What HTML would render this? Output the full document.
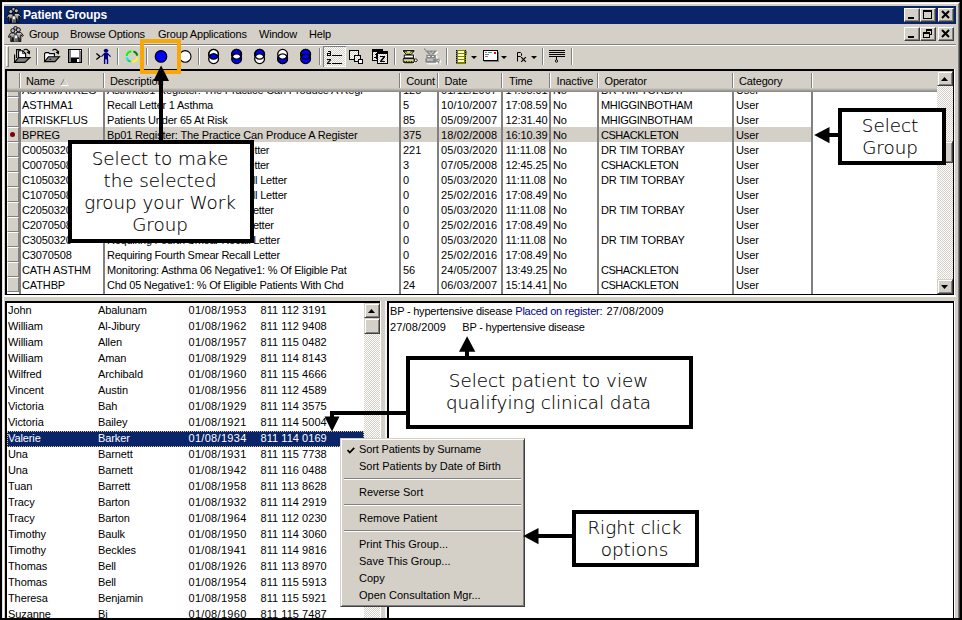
<!DOCTYPE html>
<html lang="en"><head><meta charset="utf-8"><title>Patient Groups</title>
<style>
html,body{margin:0;padding:0}
body{width:962px;height:620px;overflow:hidden;background:#000;font-family:"Liberation Sans",sans-serif;font-size:11px;color:#000}
#win{position:absolute;left:0;top:0;width:962px;height:620px;background:#000;overflow:hidden}
#win div,#win span,#win i,#win b,#win svg,#win u,#win em{position:absolute;display:block;box-sizing:border-box}
#win span{white-space:nowrap;font-style:normal}
#face{left:2px;top:2px;width:958px;height:616px;background:#d4d0c8;border-left:1px solid #e8e6e1;border-top:1px solid #e8e6e1;border-right:1px solid #404040;border-bottom:0}
#face2{left:3px;top:3px;width:956px;height:615px;border-left:1px solid #fff;border-top:1px solid #fff;border-right:1px solid #808080}
/* title */
#title{left:4px;top:6px;width:952px;height:18px;background:#0a246a}
#title span{left:19px;top:0;line-height:18px;color:#fff;font-weight:bold;font-size:12px;letter-spacing:-0.15px}
.cb{width:16px;height:14px;background:#d4d0c8;border:1px solid;border-color:#fff #404040 #404040 #fff;box-shadow:inset -1px -1px 0 #808080}
.cb svg{left:0;top:0}
/* menu */
#menu{left:4px;top:24px;width:952px;height:19px}
#menu span{top:0;line-height:20px;font-size:11px;letter-spacing:-0.2px}
#mline{left:4px;top:44px;width:952px;height:2px;border-top:1px solid #808080;border-bottom:1px solid #fff}
/* toolbar */
#tb{left:4px;top:45px;width:952px;height:23px}
.grip{left:2px;top:1px;width:3px;height:21px;border-left:1px solid #fff;border-top:1px solid #fff;border-right:1px solid #808080;border-bottom:1px solid #808080}
.tsep{top:3px;width:2px;height:17px;border-left:1px solid #808080;border-right:1px solid #fff}
.tpress{left:319px;top:1px;width:23px;height:21px;border:1px solid;border-color:#808080 #fff #fff #808080;background:#eae8e4}
/* top table */
#tbl{z-index:0;left:5px;top:69px;width:949px;height:226px;border-left:2px solid #000;border-top:2px solid #000;border-right:1px solid #000;border-bottom:1px solid #000;background:#fff;overflow:hidden}
#tblw{left:954px;top:69px;width:1px;height:226px;background:#fff}
#thead{left:0;top:0;width:930px;height:20.6px;z-index:2;background:linear-gradient(to bottom,#d4d0c8 0,#d4d0c8 17px,#b4b1ab 18.5px,#8c8a86 20.6px)}
.hs{top:2px;width:2px;height:15px;border-left:1px solid #808080;border-right:1px solid #fff}
.hc{top:0;line-height:20px;font-size:11px;letter-spacing:-0.15px}
.sortarrow{left:53px;top:6.5px}
#tbody{left:0;top:20px;width:930px;height:203px;overflow:hidden;background:#fff}
.tr{left:0;width:804px;height:15px}
.tr span{top:0.6px;line-height:15px;letter-spacing:-0.12px}
.tr.sel{background:#d4d0c8}
.ind{left:0;top:0;width:12px;height:15px;background:#d4d0c8;border:1px solid;border-color:#fff #808080 #808080 #fff}
.ind u{left:2px;top:4px;width:5px;height:5px;border-radius:50%;background:#800000}
.vs{top:0;width:2px;height:203px;background:#808080}
/* scrollbars */
.sb{width:16px;background:#eae8e4;background-image:linear-gradient(45deg,#fff 25%,transparent 25%,transparent 75%,#fff 75%),linear-gradient(45deg,#fff 25%,transparent 25%,transparent 75%,#fff 75%);background-size:2px 2px;background-position:0 0,1px 1px;background-color:#d4d0c8}
.sbb{left:0;width:16px;height:15px;background:#d4d0c8;border:1px solid;border-color:#d4d0c8 #404040 #404040 #d4d0c8;box-shadow:inset 1px 1px 0 #fff,inset -1px -1px 0 #808080}
.sbb svg{left:50%;top:50%;margin-left:-4px;margin-top:-2px}
.sbt{left:0;width:16px;background:#d4d0c8;border:1px solid;border-color:#d4d0c8 #404040 #404040 #d4d0c8;box-shadow:inset 1px 1px 0 #fff,inset -1px -1px 0 #808080}
/* splitter h */
#hsplit{left:4px;top:295px;width:952px;height:6px;background:#d4d0c8;border-top:2px solid #fff}
/* patient list */
#plistb{left:5px;top:301px;width:376px;height:317px;background:#000}
#plist{left:7px;top:303px;width:373px;height:315px;background:#fff;overflow:hidden}
.pr{left:0;width:357px;height:16px}
.pr span{top:-1px;line-height:16px;letter-spacing:-0.1px}
.pr.psel{background:#0a246a;color:#fff;outline:1px dotted #d8c878;outline-offset:-1px}
#vsplit{left:380px;top:301px;width:7px;height:317px;background:#d4d0c8;border-left:1px solid #fff;border-right:2px solid #f4f3f0}
#rpaneb{left:386.5px;top:301px;width:567.5px;height:317px;background:#000}
#rpane{left:389px;top:303px;width:564px;height:315px;background:#fff;overflow:hidden}
#rpanew{left:954px;top:301px;width:1px;height:317px;background:#fff}
.rl{height:16px;line-height:16px;white-space:nowrap}
/* context menu */
#ctx{left:340px;top:438px;width:185px;height:169px;background:#d4d0c8;border:1px solid;border-color:#d4d0c8 #404040 #404040 #d4d0c8;box-shadow:inset 1px 1px 0 #fff,inset -1px -1px 0 #808080}
#ctx span{left:18px;line-height:17px;height:17px;font-size:11px}
#ctx i{left:3px;width:177px;height:2px;border-top:1px solid #808080;border-bottom:1px solid #fff}
/* callouts */
.co{background:#fff;border:4px solid #000;text-align:center;font-family:"DejaVu Sans","Liberation Sans",sans-serif;font-weight:200;font-size:18.3px;line-height:22px;color:#000;letter-spacing:0;-webkit-text-stroke:0.15px #000}
.ar{background:#000}
#obox{left:140px;top:39px;width:41px;height:35px;border:4px solid #f7a70a}

</style></head>
<body>
<div id="win">
<svg width="0" height="0" style="left:0;top:0"><defs>
<linearGradient id="pg" x1="0" y1="0" x2="0" y2="1"><stop offset="0" stop-color="#d8d8d8"/><stop offset="1" stop-color="#303030"/></linearGradient>
<g id="people">
<circle cx="7.5" cy="2.2" r="1.8" fill="#b0b0b0" stroke="#000" stroke-width="0.9"/>
<circle cx="4.8" cy="4.6" r="2" fill="#b8b8b8" stroke="#000" stroke-width="0.9"/>
<circle cx="10.4" cy="3.8" r="2" fill="#b8b8b8" stroke="#000" stroke-width="0.9"/>
<path d="M2.6 7 H7 V15.6 H5.3 V11.5 H4.5 V15.6 H2.8 V10 L1 11.6 L0.2 10.8 Z" fill="url(#pg)" stroke="#000" stroke-width="0.9"/>
<path d="M8.2 6.4 H12.8 L15.4 9.6 L14.6 10.4 L12.8 8.8 V15.6 H11 V11.8 H10.2 V15.6 H8.2 Z" fill="url(#pg)" stroke="#000" stroke-width="0.9"/>
<path d="M6.2 9 H9.6 V15.8 H8.4 V12.6 H7.6 V15.8 H6.2 Z" fill="#f0f0f0" stroke="#333" stroke-width="0.6"/>
</g>
</defs></svg>
<div id="face"></div><div id="face2"></div>
<div id="title"><svg style="left:2px;top:1px" width="16" height="16" viewBox="0 0 16 16"><use href="#people"/></svg><span>Patient Groups</span>
<div class="cb" style="left:900px;top:2px"><svg width="14" height="12" viewBox="0 0 14 12"><rect x="3" y="8" width="6" height="2"/></svg></div>
<div class="cb" style="left:916px;top:2px"><svg width="14" height="12" viewBox="0 0 14 12"><path d="M2 1 H11 V10 H2 Z M3 3 V9 H10 V3 Z" fill-rule="evenodd"/></svg></div>
<div class="cb" style="left:934px;top:2px"><svg width="14" height="12" viewBox="0 0 14 12"><path d="M3 2 L10 9 M10 2 L3 9" stroke="#000" stroke-width="2" fill="none"/></svg></div>
</div>
<div id="menu"><svg style="left:4px;top:2px" width="16" height="16" viewBox="0 0 16 16"><use href="#people"/></svg>
<span style="left:25px">Group</span><span style="left:66px">Browse Options</span><span style="left:154px">Group Applications</span><span style="left:255px">Window</span><span style="left:305px">Help</span>
<div class="cb" style="left:900px;top:3px"><svg width="14" height="12" viewBox="0 0 14 12"><rect x="3" y="8" width="6" height="2"/></svg></div>
<div class="cb" style="left:916px;top:3px"><svg width="14" height="12" viewBox="0 0 14 12"><path d="M5 1 H11 V7 H9 V10 H2 V4 H5 Z M6 3 V4 H9 V6 H10 V3 Z M3 6 V9 H8 V6 Z" fill-rule="evenodd"/></svg></div>
<div class="cb" style="left:934px;top:3px"><svg width="14" height="12" viewBox="0 0 14 12"><path d="M3 2 L10 9 M10 2 L3 9" stroke="#000" stroke-width="2" fill="none"/></svg></div>
</div>
<div id="mline"></div>
<div id="tb"><div class="grip"></div>
<svg style="left:0;top:0" width="952" height="23" viewBox="4 45 952 23">
<defs>
<pattern id="chk" width="2" height="2" patternUnits="userSpaceOnUse"><rect width="2" height="2" fill="#d4d0c8"/><rect width="1" height="1" fill="#fff"/><rect x="1" y="1" width="1" height="1" fill="#fff"/></pattern>
<clipPath id="cT"><circle cx="0" cy="-2.2" r="4.9"/></clipPath>
</defs>
<g id="seps" shape-rendering="crispEdges">
<path d="M36.5 48V65M88.5 48V65M117.5 48V65M146.5 48V65M198.5 48V65M319.5 48V65M394.5 48V65M446.5 48V65M542.5 48V65M571.5 48V65" stroke="#808080" stroke-width="1" fill="none"/>
<path d="M37.5 48V65M89.5 48V65M118.5 48V65M147.5 48V65M199.5 48V65M320.5 48V65M395.5 48V65M447.5 48V65M543.5 48V65M572.5 48V65" stroke="#fff" stroke-width="1" fill="none"/>
</g>
<!-- 1 open docs -->
<g stroke="#000" stroke-width="1.1" stroke-linejoin="miter">
<path d="M16.6 58V49.6H21" fill="none"/>
<path d="M18.6 58V50.8H22.6L25.6 53.6V58Z" fill="#fff"/>
<path d="M22.6 50.8V53.6H25.6" fill="none" stroke-width="0.8"/>
<path d="M14.6 54.5V62.4" fill="none"/>
<path d="M18.4 57.6H30L24.8 62.4H14.6Z" fill="#808080"/>
<path d="M23.6 50.4Q26.6 47.6 28.8 51.6" fill="none" stroke-width="1.2"/>
<path d="M26.6 52.4L30.2 50.4L29.8 54.6Z" fill="#000" stroke="none"/>
</g>
<!-- 2 open folder -->
<g stroke="#000" stroke-width="1.1">
<path d="M44.6 61.4V53.6L45.6 52.6H48.6L49.6 53.6H54.4V57" fill="#fff"/>
<path d="M48.4 56.8H59.4L55 61.6H44.6Z" fill="#808080"/>
<path d="M52.4 50.4Q55.6 47.8 57.8 51.6" fill="none" stroke-width="1.2"/>
<path d="M55.6 52.4L59.2 50.4L58.8 54.6Z" fill="#000" stroke="none"/>
<rect x="49.5" y="58.8" width="1.6" height="1" fill="#000" stroke="none"/>
</g>
<!-- 3 save -->
<g shape-rendering="crispEdges">
<rect x="68" y="49" width="14" height="14" fill="#000"/>
<rect x="69" y="50" width="2" height="12" fill="#808080"/>
<rect x="79" y="50" width="2" height="12" fill="#808080"/>
<rect x="71" y="50" width="8" height="7" fill="#fff"/>
<rect x="71" y="57" width="8" height="1" fill="#808080"/>
<rect x="77" y="59" width="2" height="3" fill="#fff"/>
<rect x="80" y="50" width="1" height="1" fill="#fff"/>
</g>
<!-- 4 person -->
<path d="M96.4 53.4L100 56.5L96.4 59.6" fill="none" stroke="#000" stroke-width="1.3"/>
<g fill="#000080" stroke="none">
<circle cx="106" cy="50.8" r="2.1"/>
<rect x="103.6" y="50" width="4.8" height="1.6" rx="0.8"/>
<rect x="104" y="53" width="4" height="6.4"/>
<rect x="103.9" y="59" width="1.4" height="5"/>
<rect x="106.8" y="59" width="1.4" height="5"/>
<path d="M104.4 52.8L101 56.2L101.8 57L105 54Z M107.6 52.8L111 56.2L110.2 57L107 54Z"/>
</g>
<!-- 5 ring -->
<g fill="none" stroke-width="2">
<path d="M126.7 56A5.3 5.3 0 0 1 131.4 51.2" stroke="#00ff00"/>
<path d="M133.4 51.4A5.3 5.3 0 0 1 137.3 55.6" stroke="#008000"/>
<path d="M137.3 57.4A5.3 5.3 0 0 1 132.6 61.8" stroke="#ffff00"/>
<path d="M130.8 61.6A5.3 5.3 0 0 1 126.7 57.6" stroke="#00e060"/>
<path d="M127.6 59.6A5.3 5.3 0 0 1 126.7 57.4" stroke="#00ffff"/>
</g>
<!-- 6 circles -->
<circle cx="161" cy="56.4" r="5.8" fill="#0000ff" stroke="#000" stroke-width="1.1"/>
<circle cx="185.2" cy="56.4" r="5.8" fill="#fff" stroke="#000" stroke-width="1.1"/>
<!-- 7 venns -->
<g transform="translate(213.6 56.5)" stroke="#000" stroke-width="1.3">
<circle cx="0" cy="-2.2" r="4.9" fill="#fff"/><circle cx="0" cy="2.2" r="4.9" fill="#fff"/>
<circle cx="0" cy="2.2" r="4.9" fill="#0000ff" clip-path="url(#cT)"/><circle cx="0" cy="-2.2" r="4.9" fill="none"/>
</g>
<g transform="translate(236.6 56.5)" stroke="#000" stroke-width="1.3">
<circle cx="0" cy="-2.2" r="4.9" fill="#0000ff"/><circle cx="0" cy="2.2" r="4.9" fill="#0000ff"/>
<circle cx="0" cy="2.2" r="4.9" fill="#fff" clip-path="url(#cT)"/><circle cx="0" cy="-2.2" r="4.9" fill="none"/>
</g>
<g transform="translate(259.6 56.5)" stroke="#000" stroke-width="1.3">
<circle cx="0" cy="-2.2" r="4.9" fill="#0000ff"/><circle cx="0" cy="2.2" r="4.9" fill="#fff"/><circle cx="0" cy="-2.2" r="4.9" fill="none"/>
</g>
<g transform="translate(282.6 56.5)" stroke="#000" stroke-width="1.3">
<circle cx="0" cy="2.2" r="4.9" fill="#0000ff"/><circle cx="0" cy="-2.2" r="4.9" fill="#fff"/><circle cx="0" cy="2.2" r="4.9" fill="none"/>
</g>
<g transform="translate(305.6 56.5)" stroke="#000" stroke-width="1.3">
<circle cx="0" cy="-2.2" r="4.9" fill="#0000ff"/><circle cx="0" cy="2.2" r="4.9" fill="#0000ff"/><circle cx="0" cy="-2.2" r="4.9" fill="none"/>
</g>
<!-- 8 pressed a-z -->
<g shape-rendering="crispEdges">
<rect x="323" y="46" width="23" height="21" fill="url(#chk)"/>
<path d="M323.5 67V46.5H346" stroke="#808080" fill="none"/>
<path d="M345.5 47V66.5H324" stroke="#fff" fill="none"/>
<path d="M332 55.5H342M332 63.5H342" stroke="#000" fill="none"/>
<path d="M327.5 51.5H330.5V55.5H327.5V53.5H330.5" stroke="#000" fill="none"/>
<path d="M327 59.5H331M327 63.5H331" stroke="#000" fill="none"/>
</g>
<path d="M330.6 59.8L327.4 63.2" stroke="#000" stroke-width="1.2" fill="none"/>
<!-- 9 cascade -->
<g stroke="#000" stroke-width="1.3" shape-rendering="crispEdges">
<rect x="349.6" y="50.6" width="9" height="9" fill="url(#chk)"/>
<rect x="354.6" y="55.6" width="6" height="6" fill="url(#chk)"/>
<rect x="358.6" y="59.6" width="4" height="4" fill="#fff"/>
</g>
<!-- 10 two windows -->
<g shape-rendering="crispEdges">
<rect x="372" y="49" width="11" height="12" fill="#000"/>
<rect x="373" y="52" width="9" height="8" fill="url(#chk)"/>
<rect x="377" y="51" width="11" height="13" fill="#000"/>
<rect x="378" y="54" width="9" height="9" fill="url(#chk)"/>
<path d="M380 56.5H385M380 61.5H385" stroke="#000"/>
<path d="M376.5 53V59M375 54.5H377M374 57.5H377" stroke="#000"/>
</g>
<path d="M384.6 56.6L380.6 61.4" stroke="#000" stroke-width="1.6"/>
<!-- 11 filter -->
<g>
<g fill="#fff" stroke="#fff" stroke-width="2" stroke-linejoin="round">
<path d="M403 50.8H414.4L411 54.6H406.4Z"/><rect x="404.2" y="55" width="9.2" height="3"/>
<path d="M403.2 58.6H414.2V61.4Q414.2 62.8 412.6 62.8H404.8Q403.2 62.8 403.2 61.4Z"/><rect x="414.4" y="58.9" width="2.8" height="2.8" rx="1"/>
</g>
<path d="M403 50.8H414.4L411 54.6H406.4Z" fill="#d8d878" stroke="#000" stroke-width="1"/>
<path d="M403.4 50.9H414" stroke="#000" stroke-width="1.2"/>
<path d="M405.6 51.6L408.7 54L411.8 51.6" fill="none" stroke="#808000" stroke-width="0.9"/>
<path d="M407 51.6H410.4" stroke="#fff" stroke-width="0.8"/>
<rect x="404.2" y="55" width="9.2" height="3" fill="#fff" stroke="#000" stroke-width="1"/>
<path d="M403.2 58.6H414.2V61.4Q414.2 62.8 412.6 62.8H404.8Q403.2 62.8 403.2 61.4Z" fill="#c8c8c0" stroke="#000" stroke-width="1"/>
<path d="M403.8 61.8H413.6" stroke="#000" stroke-width="1.6"/>
<path d="M404.2 60.6L405.4 61.9L406.6 60.6L407.8 61.9L409 60.6L410.2 61.9L411.4 60.6L412.6 61.9L413.6 60.8" fill="none" stroke="#e0e000" stroke-width="0.9"/>
<rect x="414.4" y="58.9" width="2.8" height="2.8" rx="1" fill="#fff" stroke="#000" stroke-width="1"/>
</g>
<!-- 12 filter disabled -->
<g transform="translate(22.4 0)">
<g transform="translate(1.1 1.1)" fill="#fff" stroke="#fff" stroke-width="1">
<path d="M403 50.8H414.4L411 54.6H406.4Z"/><rect x="404.2" y="55" width="9.2" height="3"/>
<path d="M403.2 58.6H414.2V61.4Q414.2 62.8 412.6 62.8H404.8Q403.2 62.8 403.2 61.4Z"/><rect x="414.4" y="58.9" width="2.8" height="2.8" rx="1"/>
<path d="M401.6 48.8L404 50.6M414 60L417 63.4" stroke-width="1.1"/>
</g>
<g fill="#868686" stroke="#868686" stroke-width="0.4">
<path d="M403 50.8H414.4L411 54.6H406.4Z"/><rect x="404.2" y="55" width="9.2" height="3"/>
<path d="M403.2 58.6H414.2V61.4Q414.2 62.8 412.6 62.8H404.8Q403.2 62.8 403.2 61.4Z"/><rect x="414.4" y="58.9" width="2.8" height="2.8" rx="1"/>
<path d="M401.6 48.8L404 50.6M414 60L417 63.4" stroke-width="1.1"/>
</g>
<path d="M406.4 51.6L408.7 53.6L411 51.6" fill="none" stroke="#e8e8e8" stroke-width="0.9"/>
<path d="M405.4 56.5H407.6M409.6 56.5H411.4M404.6 60H410.6" stroke="#f4f4f4" stroke-width="1"/>
<rect x="415.2" y="59.8" width="1.2" height="1" fill="#f4f4f4"/>
</g>
<!-- 13 film -->
<g shape-rendering="crispEdges">
<rect x="456" y="50" width="10" height="14" fill="#808000"/>
<rect x="458" y="51" width="6" height="2" fill="#ffffc0"/>
<rect x="458" y="54" width="6" height="2" fill="#ffffc0"/>
<rect x="458" y="57" width="6" height="2" fill="#ffffc0"/>
<rect x="458" y="60" width="6" height="2" fill="#ffffc0"/>
<path d="M456.5 50V64M465.5 50V64" stroke="#000" stroke-dasharray="1 1" fill="none"/>
<rect x="466" y="51" width="1" height="4" fill="#808080"/>
</g>
<path d="M471 56H477L474 59Z" fill="#000"/>
<!-- 14 envelope -->
<g shape-rendering="crispEdges">
<rect x="483.5" y="50.5" width="14" height="10" fill="#fff" stroke="#000"/>
<rect x="484" y="61" width="15" height="1" fill="#808080"/>
<rect x="498" y="52" width="1" height="10" fill="#808080"/>
<rect x="494" y="52" width="2" height="2" fill="#ff0000"/>
<path d="M485 52.5H487M488 52.5H492M485 54.5H489M485 56.5H488" stroke="#808080"/>
</g>
<path d="M501 56H507L504 59Z" fill="#000"/>
<!-- 15 Rx -->
<g fill="none" stroke="#000" stroke-width="1">
<path d="M517.5 61.5V52.5H520.5L521.5 53.5V55.5L520.5 56.5H517.5"/>
<path d="M521.2 57.2L525.8 61.8M525.8 57.2L521.2 61.8" stroke-width="1.2"/>
</g>
<path d="M531 56H537L534 59Z" fill="#000"/>
<!-- 16 lines -->
<g shape-rendering="crispEdges">
<path d="M549 50.5H565M549 52.5H565M549 54.5H565M549 56.5H565" stroke="#000"/>
<path d="M556.5 57V60" stroke="#000"/>
</g>
<circle cx="556.5" cy="61" r="1.2" fill="none" stroke="#000" stroke-width="0.9"/>
</svg>

</div>
<div id="tblw"></div><div id="hsplit"></div><div id="plistb"></div><div id="vsplit"></div><div id="rpaneb"></div><div id="rpanew"></div>
<div id="tbl">
<div id="thead">
<i class="hs" style="left:12px"></i><i class="hs" style="left:96px"></i><i class="hs" style="left:392px"></i><i class="hs" style="left:430px"></i><i class="hs" style="left:494px"></i><i class="hs" style="left:542.3px"></i><i class="hs" style="left:590.3px"></i><i class="hs" style="left:725.2px"></i><i class="hs" style="left:804px"></i><span class="hc" style="left:19px">Name</span><span class="hc" style="left:103px">Description</span><span class="hc" style="left:399.3px">Count</span><span class="hc" style="left:437.5px">Date</span><span class="hc" style="left:502px">Time</span><span class="hc" style="left:549.5px">Inactive</span><span class="hc" style="left:597.5px">Operator</span><span class="hc" style="left:732px">Category</span><svg class="sortarrow" width="9" height="8" viewBox="0 0 9 8"><path d="M4.5 0.5 L0.5 7.5 H8.5 Z" fill="none" stroke="#808080"/><path d="M4.5 0.5 L8.5 7.5 H0.5" fill="none" stroke="#fff"/></svg></div>
<div id="tbody">
<div class="tr" style="top:-9px"><b class="ind"></b><span style="left:15px;letter-spacing:-0.12px">ASTHMATREG</span><span style="left:100px;letter-spacing:-0.157px">Asthma01 Register: The Practice Can Produce A Regi</span><span style="left:396px;letter-spacing:0px">125</span><span style="left:434px;letter-spacing:0.13px">01/12/2007</span><span style="left:498.5px;letter-spacing:-0.1px">14:08.01</span><span style="left:546px;letter-spacing:-0.1px">No</span><span style="left:594px;letter-spacing:-0.082px">DR TIM TORBAY</span><span style="left:729px;letter-spacing:-0.1px">User</span></div>
<div class="tr" style="top:6px"><b class="ind"></b><span style="left:15px;letter-spacing:-0.12px">ASTHMA1</span><span style="left:100px;letter-spacing:-0.212px">Recall Letter 1 Asthma</span><span style="left:396px;letter-spacing:0px">5</span><span style="left:434px;letter-spacing:0.13px">10/10/2007</span><span style="left:498.5px;letter-spacing:-0.1px">17:08.59</span><span style="left:546px;letter-spacing:-0.1px">No</span><span style="left:594px;letter-spacing:-0.296px">MHIGGINBOTHAM</span><span style="left:729px;letter-spacing:-0.1px">User</span></div>
<div class="tr" style="top:21px"><b class="ind"></b><span style="left:15px;letter-spacing:-0.12px">ATRISKFLUS</span><span style="left:100px;letter-spacing:-0.194px">Patients Under 65 At Risk</span><span style="left:396px;letter-spacing:0px">85</span><span style="left:434px;letter-spacing:0.13px">05/09/2007</span><span style="left:498.5px;letter-spacing:-0.1px">12:31.40</span><span style="left:546px;letter-spacing:-0.1px">No</span><span style="left:594px;letter-spacing:-0.296px">MHIGGINBOTHAM</span><span style="left:729px;letter-spacing:-0.1px">User</span></div>
<div class="tr sel" style="top:36px"><b class="ind"><u></u></b><span style="left:15px;letter-spacing:-0.12px">BPREG</span><span style="left:100px;letter-spacing:-0.147px">Bp01 Register: The Practice Can Produce A Register</span><span style="left:396px;letter-spacing:0px">375</span><span style="left:434px;letter-spacing:0.13px">18/02/2008</span><span style="left:498.5px;letter-spacing:-0.1px">16:10.39</span><span style="left:546px;letter-spacing:-0.1px">No</span><span style="left:594px;letter-spacing:-0.457px">CSHACKLETON</span><span style="left:729px;letter-spacing:-0.1px">User</span></div>
<div class="tr" style="top:51px"><b class="ind"></b><span style="left:15px;letter-spacing:-0.12px">C0050320</span><span style="left:100px;letter-spacing:-0.274px">Requiring First Smear Recall Letter</span><span style="left:396px;letter-spacing:0px">221</span><span style="left:434px;letter-spacing:0.13px">05/03/2020</span><span style="left:498.5px;letter-spacing:-0.1px">11:11.08</span><span style="left:546px;letter-spacing:-0.1px">No</span><span style="left:594px;letter-spacing:-0.082px">DR TIM TORBAY</span><span style="left:729px;letter-spacing:-0.1px">User</span></div>
<div class="tr" style="top:66px"><b class="ind"></b><span style="left:15px;letter-spacing:-0.12px">C0070508</span><span style="left:100px;letter-spacing:-0.274px">Requiring First Smear Recall Letter</span><span style="left:396px;letter-spacing:0px">3</span><span style="left:434px;letter-spacing:0.13px">07/05/2008</span><span style="left:498.5px;letter-spacing:-0.1px">12:45.25</span><span style="left:546px;letter-spacing:-0.1px">No</span><span style="left:594px;letter-spacing:-0.457px">CSHACKLETON</span><span style="left:729px;letter-spacing:-0.1px">User</span></div>
<div class="tr" style="top:81px"><b class="ind"></b><span style="left:15px;letter-spacing:-0.12px">C1050320</span><span style="left:100px;letter-spacing:-0.214px">Requiring Second Smear Recall Letter</span><span style="left:396px;letter-spacing:0px">0</span><span style="left:434px;letter-spacing:0.13px">05/03/2020</span><span style="left:498.5px;letter-spacing:-0.1px">11:11.08</span><span style="left:546px;letter-spacing:-0.1px">No</span><span style="left:594px;letter-spacing:-0.082px">DR TIM TORBAY</span><span style="left:729px;letter-spacing:-0.1px">User</span></div>
<div class="tr" style="top:96px"><b class="ind"></b><span style="left:15px;letter-spacing:-0.12px">C1070508</span><span style="left:100px;letter-spacing:-0.214px">Requiring Second Smear Recall Letter</span><span style="left:396px;letter-spacing:0px">0</span><span style="left:434px;letter-spacing:0.13px">25/02/2016</span><span style="left:498.5px;letter-spacing:-0.1px">17:08.49</span><span style="left:546px;letter-spacing:-0.1px">No</span><span style="left:729px;letter-spacing:-0.1px">User</span></div>
<div class="tr" style="top:111px"><b class="ind"></b><span style="left:15px;letter-spacing:-0.12px">C2050320</span><span style="left:100px;letter-spacing:-0.245px">Requiring Third Smear Recall Letter</span><span style="left:396px;letter-spacing:0px">0</span><span style="left:434px;letter-spacing:0.13px">05/03/2020</span><span style="left:498.5px;letter-spacing:-0.1px">11:11.08</span><span style="left:546px;letter-spacing:-0.1px">No</span><span style="left:594px;letter-spacing:-0.082px">DR TIM TORBAY</span><span style="left:729px;letter-spacing:-0.1px">User</span></div>
<div class="tr" style="top:126px"><b class="ind"></b><span style="left:15px;letter-spacing:-0.12px">C2070508</span><span style="left:100px;letter-spacing:-0.245px">Requiring Third Smear Recall Letter</span><span style="left:396px;letter-spacing:0px">0</span><span style="left:434px;letter-spacing:0.13px">25/02/2016</span><span style="left:498.5px;letter-spacing:-0.1px">17:08.49</span><span style="left:546px;letter-spacing:-0.1px">No</span><span style="left:729px;letter-spacing:-0.1px">User</span></div>
<div class="tr" style="top:141px"><b class="ind"></b><span style="left:15px;letter-spacing:-0.12px">C3050320</span><span style="left:100px;letter-spacing:-0.261px">Requiring Fourth Smear Recall Letter</span><span style="left:396px;letter-spacing:0px">0</span><span style="left:434px;letter-spacing:0.13px">05/03/2020</span><span style="left:498.5px;letter-spacing:-0.1px">11:11.08</span><span style="left:546px;letter-spacing:-0.1px">No</span><span style="left:594px;letter-spacing:-0.082px">DR TIM TORBAY</span><span style="left:729px;letter-spacing:-0.1px">User</span></div>
<div class="tr" style="top:156px"><b class="ind"></b><span style="left:15px;letter-spacing:-0.12px">C3070508</span><span style="left:100px;letter-spacing:-0.261px">Requiring Fourth Smear Recall Letter</span><span style="left:396px;letter-spacing:0px">0</span><span style="left:434px;letter-spacing:0.13px">25/02/2016</span><span style="left:498.5px;letter-spacing:-0.1px">17:08.49</span><span style="left:546px;letter-spacing:-0.1px">No</span><span style="left:729px;letter-spacing:-0.1px">User</span></div>
<div class="tr" style="top:171px"><b class="ind"></b><span style="left:15px;letter-spacing:-0.12px">CATH ASTHM</span><span style="left:100px;letter-spacing:-0.224px">Monitoring: Asthma 06 Negative1: % Of Eligible Pat</span><span style="left:396px;letter-spacing:0px">56</span><span style="left:434px;letter-spacing:0.13px">24/05/2007</span><span style="left:498.5px;letter-spacing:-0.1px">13:49.25</span><span style="left:546px;letter-spacing:-0.1px">No</span><span style="left:594px;letter-spacing:-0.457px">CSHACKLETON</span><span style="left:729px;letter-spacing:-0.1px">User</span></div>
<div class="tr" style="top:186px"><b class="ind"></b><span style="left:15px;letter-spacing:-0.12px">CATHBP</span><span style="left:100px;letter-spacing:-0.24px">Chd 05 Negative1: % Of Eligible Patients With Chd</span><span style="left:396px;letter-spacing:0px">24</span><span style="left:434px;letter-spacing:0.13px">06/03/2007</span><span style="left:498.5px;letter-spacing:-0.1px">15:14.41</span><span style="left:546px;letter-spacing:-0.1px">No</span><span style="left:594px;letter-spacing:-0.457px">CSHACKLETON</span><span style="left:729px;letter-spacing:-0.1px">User</span></div>
<i class="vs" style="left:12px"></i><i class="vs" style="left:96px"></i><i class="vs" style="left:392px"></i><i class="vs" style="left:430px"></i><i class="vs" style="left:494px"></i><i class="vs" style="left:542.3px"></i><i class="vs" style="left:590.3px"></i><i class="vs" style="left:725.2px"></i><i class="vs" style="left:804px"></i></div>
<div class="sb" style="left:930px;top:0;height:223px"><div class="sbb" style="top:0"><svg width="7" height="4" viewBox="0 0 7 4"><path d="M3.5 0 L7 4 H0 Z"/></svg></div><div class="sbt" style="top:70px;height:22px"></div><div class="sbb" style="bottom:0"><svg width="7" height="4" viewBox="0 0 7 4"><path d="M0 0 H7 L3.5 4 Z"/></svg></div></div>
</div>
<div id="plist">
<div class="pr" style="top:0px"><span style="left:1px">John</span><span style="left:91px">Abalunam</span><span style="left:181.5px;letter-spacing:0.3px">01/08/1953</span><span style="left:253.5px;letter-spacing:0.05px">811 112 3191</span></div>
<div class="pr" style="top:16px"><span style="left:1px">William</span><span style="left:91px">Al-Jibury</span><span style="left:181.5px;letter-spacing:0.3px">01/08/1962</span><span style="left:253.5px;letter-spacing:0.05px">811 112 9408</span></div>
<div class="pr" style="top:32px"><span style="left:1px">William</span><span style="left:91px">Allen</span><span style="left:181.5px;letter-spacing:0.3px">01/08/1957</span><span style="left:253.5px;letter-spacing:0.05px">811 115 0482</span></div>
<div class="pr" style="top:48px"><span style="left:1px">William</span><span style="left:91px">Aman</span><span style="left:181.5px;letter-spacing:0.3px">01/08/1929</span><span style="left:253.5px;letter-spacing:0.05px">811 114 8143</span></div>
<div class="pr" style="top:64px"><span style="left:1px">Wilfred</span><span style="left:91px">Archibald</span><span style="left:181.5px;letter-spacing:0.3px">01/08/1960</span><span style="left:253.5px;letter-spacing:0.05px">811 115 4666</span></div>
<div class="pr" style="top:80px"><span style="left:1px">Vincent</span><span style="left:91px">Austin</span><span style="left:181.5px;letter-spacing:0.3px">01/08/1956</span><span style="left:253.5px;letter-spacing:0.05px">811 112 4589</span></div>
<div class="pr" style="top:96px"><span style="left:1px">Victoria</span><span style="left:91px">Bah</span><span style="left:181.5px;letter-spacing:0.3px">01/08/1929</span><span style="left:253.5px;letter-spacing:0.05px">811 114 3575</span></div>
<div class="pr" style="top:112px"><span style="left:1px">Victoria</span><span style="left:91px">Bailey</span><span style="left:181.5px;letter-spacing:0.3px">01/08/1921</span><span style="left:253.5px;letter-spacing:0.05px">811 114 5004</span></div>
<div class="pr psel" style="top:128px"><span style="left:1px">Valerie</span><span style="left:91px">Barker</span><span style="left:181.5px;letter-spacing:0.3px">01/08/1934</span><span style="left:253.5px;letter-spacing:0.05px">811 114 0169</span></div>
<div class="pr" style="top:144px"><span style="left:1px">Una</span><span style="left:91px">Barnett</span><span style="left:181.5px;letter-spacing:0.3px">01/08/1931</span><span style="left:253.5px;letter-spacing:0.05px">811 115 7738</span></div>
<div class="pr" style="top:160px"><span style="left:1px">Una</span><span style="left:91px">Barnett</span><span style="left:181.5px;letter-spacing:0.3px">01/08/1942</span><span style="left:253.5px;letter-spacing:0.05px">811 116 0488</span></div>
<div class="pr" style="top:176px"><span style="left:1px">Tuan</span><span style="left:91px">Barrett</span><span style="left:181.5px;letter-spacing:0.3px">01/08/1958</span><span style="left:253.5px;letter-spacing:0.05px">811 113 8628</span></div>
<div class="pr" style="top:192px"><span style="left:1px">Tracy</span><span style="left:91px">Barton</span><span style="left:181.5px;letter-spacing:0.3px">01/08/1932</span><span style="left:253.5px;letter-spacing:0.05px">811 114 2919</span></div>
<div class="pr" style="top:208px"><span style="left:1px">Tracy</span><span style="left:91px">Barton</span><span style="left:181.5px;letter-spacing:0.3px">01/08/1964</span><span style="left:253.5px;letter-spacing:0.05px">811 112 0230</span></div>
<div class="pr" style="top:224px"><span style="left:1px">Timothy</span><span style="left:91px">Baulk</span><span style="left:181.5px;letter-spacing:0.3px">01/08/1950</span><span style="left:253.5px;letter-spacing:0.05px">811 114 3060</span></div>
<div class="pr" style="top:240px"><span style="left:1px">Timothy</span><span style="left:91px">Beckles</span><span style="left:181.5px;letter-spacing:0.3px">01/08/1941</span><span style="left:253.5px;letter-spacing:0.05px">811 114 9816</span></div>
<div class="pr" style="top:256px"><span style="left:1px">Thomas</span><span style="left:91px">Bell</span><span style="left:181.5px;letter-spacing:0.3px">01/08/1926</span><span style="left:253.5px;letter-spacing:0.05px">811 113 8970</span></div>
<div class="pr" style="top:272px"><span style="left:1px">Thomas</span><span style="left:91px">Bell</span><span style="left:181.5px;letter-spacing:0.3px">01/08/1954</span><span style="left:253.5px;letter-spacing:0.05px">811 115 5913</span></div>
<div class="pr" style="top:288px"><span style="left:1px">Theresa</span><span style="left:91px">Benjamin</span><span style="left:181.5px;letter-spacing:0.3px">01/08/1958</span><span style="left:253.5px;letter-spacing:0.05px">811 115 5921</span></div>
<div class="pr" style="top:304px"><span style="left:1px">Suzanne</span><span style="left:91px">Bi</span><span style="left:181.5px;letter-spacing:0.3px">01/08/1960</span><span style="left:253.5px;letter-spacing:0.05px">811 115 7487</span></div>
<div class="sb" style="left:357px;top:0;height:315px;width:16px"><div class="sbb" style="top:0;width:16px;height:15px"><svg width="7" height="4" viewBox="0 0 7 4"><path d="M3.5 0 L7 4 H0 Z"/></svg></div><div class="sbt" style="top:15px;height:16px;width:16px"></div></div>
</div>
<div id="rpane"><span class="rl" style="top:-0.5px;left:1px;letter-spacing:-0.21px">BP - hypertensive disease</span><span class="rl" style="top:-0.5px;left:126.3px;letter-spacing:-0.25px;color:#000080">Placed on register:</span><span class="rl" style="top:-0.5px;left:217.4px;letter-spacing:0.25px">27/08/2009</span><span class="rl" style="top:15.5px;left:1px;letter-spacing:0.1px">27/08/2009</span><span class="rl" style="top:15.5px;left:73.3px;letter-spacing:-0.21px">BP - hypertensive disease</span></div>
<div id="ctx">
<svg style="left:6px;top:8px" width="8" height="8" viewBox="0 0 8 8"><path d="M0.5 3 L2.8 5.5 L7.2 0.8" stroke="#000" stroke-width="1.8" fill="none"/></svg>
<span style="top:2px;letter-spacing:-0.14px">Sort Patients by Surname</span>
<span style="top:19px">Sort Patients by Date of Birth</span>
<i style="top:38.5px"></i>
<span style="top:45px">Reverse Sort</span>
<i style="top:64.5px"></i>
<span style="top:71px">Remove Patient</span>
<i style="top:90.5px"></i>
<span style="top:97px">Print This Group...</span>
<span style="top:114px">Save This Group...</span>
<span style="top:131px">Copy</span>
<span style="top:148px">Open Consultation Mgr...</span>
</div>
<!-- callout 1 -->
<div id="obox"></div>
<div class="ar" style="left:159px;top:78px;width:4px;height:63px"></div>
<svg style="left:153px;top:65px" width="17" height="17" viewBox="0 0 17 17"><path d="M8.1 0.5 L16 16 H0.3 Z"/></svg>
<div class="co" style="left:68px;top:140px;width:186px;height:103px;padding-top:4px;padding-right:2px">Select to make<br>the selected<br>group your Work<br>Group</div>
<!-- callout 2 -->
<div class="ar" style="left:826px;top:133px;width:13px;height:4px"></div>
<svg style="left:813.5px;top:126.8px" width="16" height="17" viewBox="0 0 16 17"><path d="M0.2 8.1 L15.5 0 V16.2 Z"/></svg>
<div class="co" style="left:838px;top:108px;width:108px;height:57px;padding-top:3px;padding-right:4px">Select<br>Group</div>
<!-- callout 3 -->
<div class="ar" style="left:465.1px;top:349px;width:4px;height:8px"></div>
<svg style="left:459px;top:336px" width="17" height="16" viewBox="0 0 17 16"><path d="M8.1 0.3 L16.3 15.8 H0 Z"/></svg>
<div class="ar" style="left:330px;top:411px;width:77px;height:4px"></div>
<div class="ar" style="left:330px;top:411px;width:4px;height:7px"></div>
<svg style="left:324px;top:416px" width="16" height="16" viewBox="0 0 16 16"><path d="M0.5 0.5 H15.5 L8 15.5 Z"/></svg>
<div class="co" style="left:406px;top:356px;width:287px;height:73px;padding-top:10px;padding-right:2px">Select patient to view<br>qualifying clinical data</div>
<!-- callout 4 -->
<div class="ar" style="left:537px;top:534px;width:36px;height:4px"></div>
<svg style="left:522.8px;top:527.6px" width="16" height="17" viewBox="0 0 16 17"><path d="M0.2 8.1 L15.5 0 V16.2 Z"/></svg>
<div class="co" style="left:572px;top:510px;width:127px;height:57px;padding-top:3px;padding-right:2px">Right click<br>options</div>
</div>
</body></html>
